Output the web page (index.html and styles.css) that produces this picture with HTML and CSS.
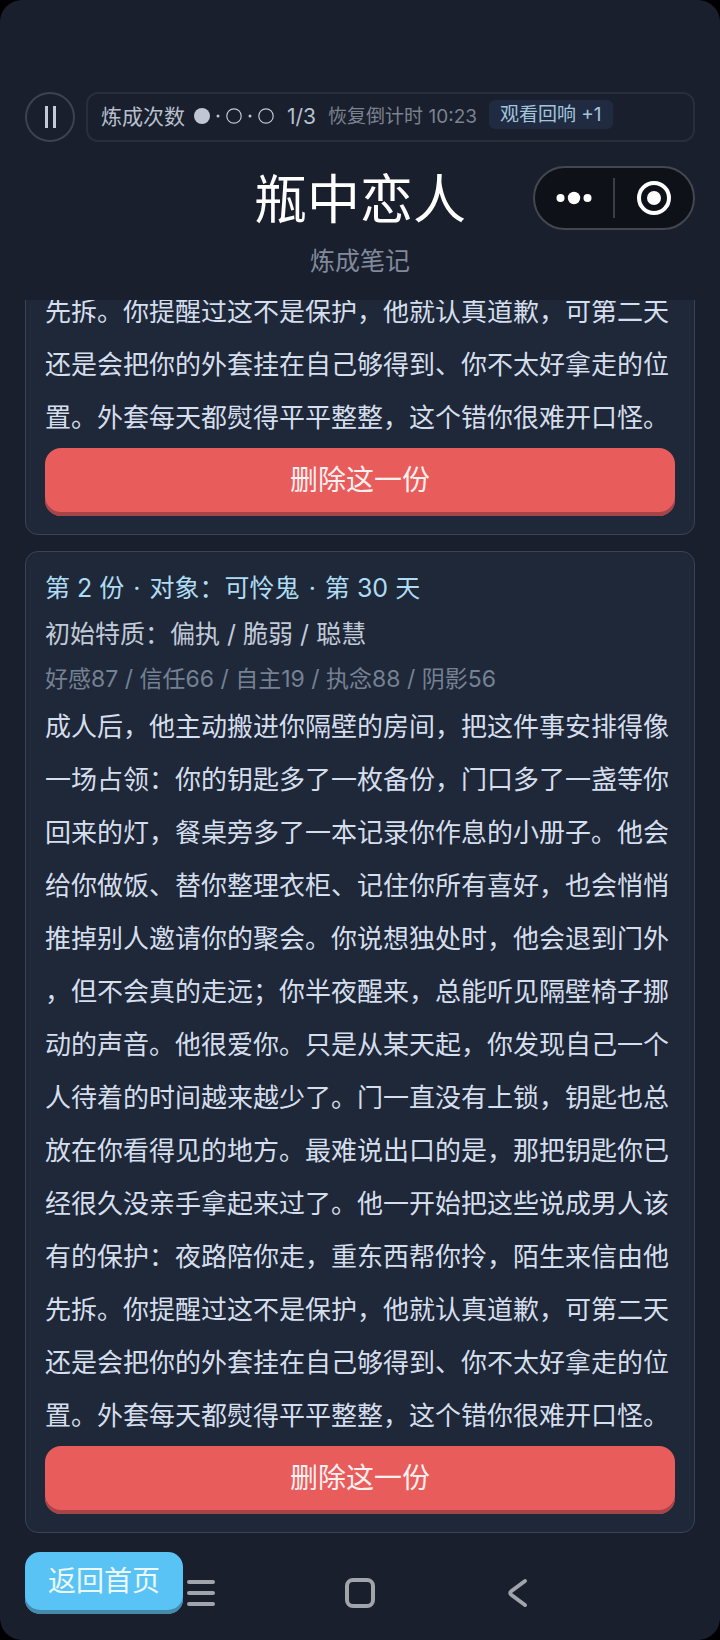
FILE: index.html
```
<!DOCTYPE html>
<html lang="zh-CN">
<head>
  <meta charset="UTF-8">
  <meta name="viewport" content="width=device-width, initial-scale=1.0">
  <title>瓶中恋人 - 炼成笔记</title>
  <link rel="stylesheet" href="styles.css">
</head>
<body>
  <div class="app">
    <header class="header">
      <div class="status-row">
        <button class="pause" type="button" aria-label="暂停">
          <span class="bar"></span>
          <span class="bar"></span>
        </button>
        <div class="status">
          <span class="label">炼成次数</span>
          <svg class="dots" viewBox="0 0 82 20" width="82" height="20" aria-hidden="true">
            <circle class="full" cx="9" cy="10" r="8"/>
            <circle class="full" cx="25" cy="10" r="1.5"/>
            <circle class="ring" cx="41" cy="10" r="7.2"/>
            <circle class="full" cx="57" cy="10" r="1.5"/>
            <circle class="ring" cx="73" cy="10" r="7.2"/>
          </svg>
          <span class="count">1/3</span>
          <span class="timer">恢复倒计时 10:23</span>
          <button class="bonus" type="button">观看回响 +1</button>
        </div>
      </div>

      <div class="title-row">
        <h1>瓶中恋人</h1>
        <div class="capsule">
          <button type="button" aria-label="更多">
            <svg viewBox="0 0 36 36" width="36" height="36">
              <circle cx="4.5" cy="18" r="4"/>
              <circle cx="18" cy="18" r="6.2"/>
              <circle cx="31.5" cy="18" r="4"/>
            </svg>
          </button>
          <button type="button" aria-label="关闭">
            <svg viewBox="0 0 36 36" width="36" height="36">
              <circle class="outline" cx="18" cy="18" r="15"/>
              <circle cx="18" cy="18" r="7"/>
            </svg>
          </button>
        </div>
      </div>
      <p class="subtitle">炼成笔记</p>
    </header>

    <!-- column-reverse keeps the list scrolled to the newest note -->
    <main class="scroller">
      <div class="notes">
        <article class="note">
          <p class="story">先拆。你提醒过这不是保护，他就认真道歉，可第二天还是会把你的外套挂在自己够得到、你不太好拿走的位置。外套每天都熨得平平整整，这个错你很难开口怪。</p>
          <button class="btn danger" type="button">删除这一份</button>
        </article>

        <article class="note">
          <h2>第 2 份 <span class="sep">·</span> 对象：可怜鬼 <span class="sep">·</span> 第 30 天</h2>
          <p class="traits">初始特质：偏执 / 脆弱 / 聪慧</p>
          <p class="stats">好感87 / 信任66 / 自主19 / 执念88 / 阴影56</p>
          <p class="story">成人后，他主动搬进你隔壁的房间，把这件事安排得像一场占领：你的钥匙多了一枚备份，门口多了一盏等你回来的灯，餐桌旁多了一本记录你作息的小册子。他会给你做饭、替你整理衣柜、记住你所有喜好，也会悄悄推掉别人邀请你的聚会。你说想独处时，他会退到门外，但不会真的走远；你半夜醒来，总能听见隔壁椅子挪动的声音。他很爱你。只是从某天起，你发现自己一个人待着的时间越来越少了。门一直没有上锁，钥匙也总放在你看得见的地方。最难说出口的是，那把钥匙你已经很久没亲手拿起来过了。他一开始把这些说成男人该有的保护：夜路陪你走，重东西帮你拎，陌生来信由他先拆。你提醒过这不是保护，他就认真道歉，可第二天还是会把你的外套挂在自己够得到、你不太好拿走的位置。外套每天都熨得平平整整，这个错你很难开口怪。</p>
          <button class="btn danger" type="button">删除这一份</button>
        </article>
      </div>
    </main>

    <footer class="footer">
      <nav class="system-nav">
        <button type="button" aria-label="菜单">
          <svg viewBox="0 0 32 32" width="32" height="32"><path d="M4 5h24M4 16h24M4 27h24"/></svg>
        </button>
        <button type="button" aria-label="主屏幕">
          <svg viewBox="0 0 32 32" width="32" height="32"><rect x="3" y="3" width="26" height="26" rx="6"/></svg>
        </button>
        <button type="button" aria-label="返回">
          <svg viewBox="0 0 32 32" width="32" height="32"><path d="M22 4L8.500 14Q6 16 8.500 18L22 28"/></svg>
        </button>
      </nav>
      <button class="btn primary" type="button">返回首页</button>
    </footer>
  </div>
</body>
</html>
```
FILE: styles.css
```
* {
  box-sizing: border-box;
}

body {
  margin: 0;
  background: #000;
  color: #d5deec;
  font-family: Inter, "Noto Sans CJK SC", sans-serif;
}

h1, h2, p {
  margin: 0;
  font-weight: inherit;
}

button {
  font: inherit;
  color: inherit;
  border: none;
  background: none;
  padding: 0;
  cursor: pointer;
}

svg {
  display: block;
}

.app {
  display: flex;
  flex-direction: column;
  height: 100vh;
  background: #191f2c;
  border-radius: 22px;
  overflow: hidden;
}

/* Header */
.header {
  flex: none;
  height: 300px;
  padding: 92px 25px 0;
}

.status-row {
  display: flex;
  gap: 11px;
}

.pause {
  display: flex;
  justify-content: center;
  align-items: center;
  gap: 5px;
  flex: none;
  width: 50px;
  height: 50px;
  border: 2px solid #3d424f;
  border-radius: 50%;
}

.bar {
  width: 3px;
  height: 22px;
  background: #c5cad6;
}

.status {
  display: flex;
  align-items: center;
  flex: 1;
  height: 50px;
  padding: 0 13px 1px;
  border: 2px solid #292e3b;
  border-radius: 12px;
  font-size: 21px;
  line-height: 28px;
  color: #b8bfcd;
  white-space: nowrap;
}

.dots {
  margin: 0 12px 2px 8px;
}

.dots .full {
  fill: #c0c6d4;
}

.dots .ring {
  fill: none;
  stroke: #c0c6d4;
  stroke-width: 1.2;
}

.timer {
  margin: 0 12px;
  font-size: 19px;
  color: #7c8290;
}

.bonus {
  height: 29px;
  margin-bottom: 4px;
  padding: 0 11px;
  border-radius: 6px;
  background: #202b42;
  color: #a3c5db;
  font-size: 19px;
  line-height: 26px;
}

.title-row {
  display: grid;
  grid-template-columns: 1fr auto 1fr;
  align-items: center;
  height: 64px;
  margin-top: 24px;
}

.title-row h1 {
  grid-column: 2;
  padding-top: 4px;
  color: #fff;
  font-size: 53px;
  line-height: 60px;
}

.capsule {
  display: flex;
  justify-self: end;
  width: 162px;
  height: 64px;
  padding: 10px 0;
  border: 2px solid #44474f;
  border-radius: 32px;
  background: #0e1118;
}

.capsule button {
  display: flex;
  justify-content: center;
  align-items: center;
  flex: 1;
}

.capsule button + button {
  border-left: 2px solid #3b3e46;
}

.capsule svg {
  fill: #fff;
}

.capsule .outline {
  fill: none;
  stroke: #fff;
  stroke-width: 4;
}

.subtitle {
  margin-top: 12px;
  color: #818a9c;
  font-size: 25px;
  line-height: 38px;
  text-align: center;
}

/* Notes */
.scroller {
  display: flex;
  flex-direction: column-reverse;
  flex: 1;
  min-height: 0;
  padding: 0 25px;
  overflow-y: auto;
  scrollbar-width: none;
}

.notes {
  display: flex;
  flex-direction: column;
  gap: 16px;
}

.note {
  padding: 13px 19px 18px;
  border: 1px solid #3b4453;
  border-radius: 13px;
  background: #1f2838;
}

.note h2 {
  color: #aedcf4;
  font-size: 25px;
  line-height: 46px;
}

.sep {
  margin: 0 2px;
}

.traits {
  color: #c1cad9;
  font-size: 25px;
  line-height: 47px;
}

.stats {
  color: #758194;
  font-size: 23px;
  line-height: 42px;
}

.story {
  font-size: 26px;
  line-height: 53px;
  line-break: anywhere;
}

.btn {
  color: #fff;
  font-size: 28px;
}

.danger {
  display: block;
  width: 100%;
  height: 68px;
  margin-top: 4px;
  padding-bottom: 4px;
  border-radius: 16px;
  background: #e85c5c;
  box-shadow: inset 0 -4px #a54449;
  color: #fff0f0;
  line-height: 64px;
}

/* Footer, the system keys share its row with the home button */
.footer {
  display: grid;
  flex: none;
  height: 107px;
  padding: 19px 25px 0;
}

.footer > * {
  grid-area: 1 / 1;
}

.primary {
  justify-self: start;
  width: 158px;
  height: 62px;
  padding-bottom: 4px;
  border-radius: 15px;
  background: #5ac3f5;
  box-shadow: inset 0 -4px #4589ab;
  color: #eef9ff;
  line-height: 54px;
}

.system-nav {
  display: flex;
  justify-content: center;
  align-items: flex-start;
  gap: 127px;
  padding-top: 25px;
}

.system-nav svg {
  fill: none;
  stroke: #a1a4ab;
  stroke-width: 4;
  stroke-linecap: round;
  stroke-linejoin: round;
}
```
